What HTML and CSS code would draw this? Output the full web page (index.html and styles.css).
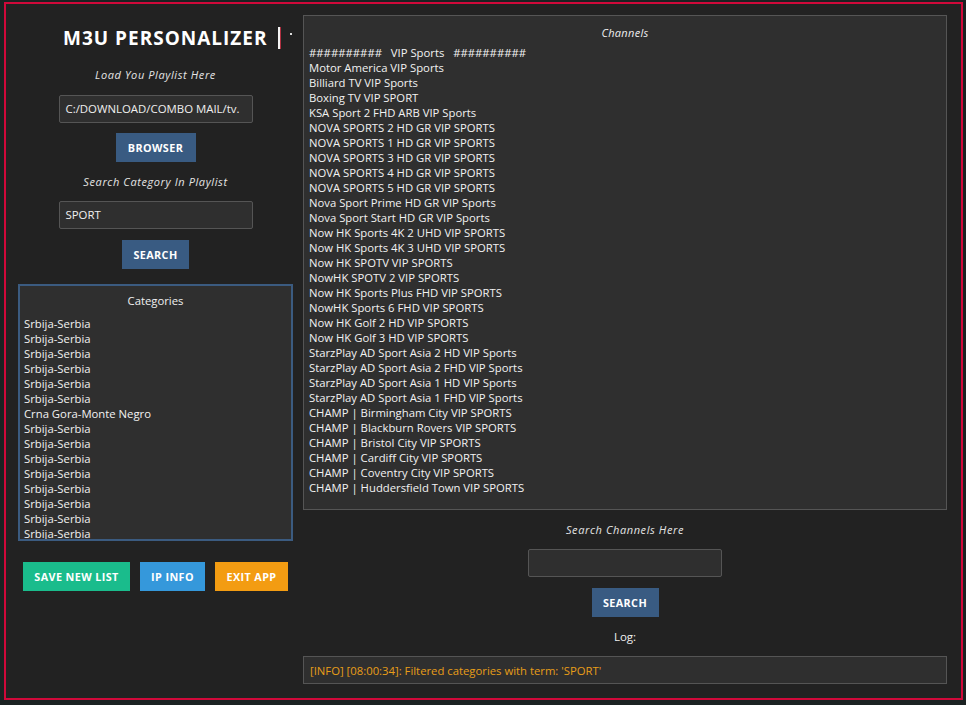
FILE: index.html
```html
<!DOCTYPE html>
<html>
<head>
<meta charset="utf-8">
<link rel="stylesheet" href="styles.css">
</head>
<body>
<div class="window">
  <div class="left">
    <div class="title-row">
      <span class="title">M3U PERSONALIZER</span>
      <span class="caret"></span>
      <span class="dot"></span>
    </div>
    <div class="label l1">Load You Playlist Here</div>
    <div class="input in1">C:/DOWNLOAD/COMBO MAIL/tv.</div>
    <div class="btn btn-blue b-browse">BROWSER</div>
    <div class="label l2">Search Category In Playlist</div>
    <div class="input in2">SPORT</div>
    <div class="btn btn-blue b-search">SEARCH</div>
    <div class="categories">
      <div class="box-title">Categories</div>
      <div class="list cat-list">
        <div>Srbija-Serbia</div>
        <div>Srbija-Serbia</div>
        <div>Srbija-Serbia</div>
        <div>Srbija-Serbia</div>
        <div>Srbija-Serbia</div>
        <div>Srbija-Serbia</div>
        <div>Crna Gora-Monte Negro</div>
        <div>Srbija-Serbia</div>
        <div>Srbija-Serbia</div>
        <div>Srbija-Serbia</div>
        <div>Srbija-Serbia</div>
        <div>Srbija-Serbia</div>
        <div>Srbija-Serbia</div>
        <div>Srbija-Serbia</div>
        <div>Srbija-Serbia</div>
      </div>
    </div>
    <div class="actions">
      <div class="btn btn-green b-save">SAVE NEW LIST</div>
      <div class="btn btn-sky b-ip">IP INFO</div>
      <div class="btn btn-orange b-exit">EXIT APP</div>
    </div>
  </div>
  <div class="right">
    <div class="channels">
      <div class="box-title italic">Channels</div>
      <div class="list ch-list">
        <div class="pre">##########   VIP Sports   ##########</div>
        <div>Motor America VIP Sports</div>
        <div>Billiard TV VIP Sports</div>
        <div>Boxing TV VIP SPORT</div>
        <div>KSA Sport 2 FHD ARB VIP Sports</div>
        <div>NOVA SPORTS 2 HD GR VIP SPORTS</div>
        <div>NOVA SPORTS 1 HD GR VIP SPORTS</div>
        <div>NOVA SPORTS 3 HD GR VIP SPORTS</div>
        <div>NOVA SPORTS 4 HD GR VIP SPORTS</div>
        <div>NOVA SPORTS 5 HD GR VIP SPORTS</div>
        <div>Nova Sport Prime HD GR VIP Sports</div>
        <div>Nova Sport Start HD GR VIP Sports</div>
        <div>Now HK Sports 4K 2 UHD VIP SPORTS</div>
        <div>Now HK Sports 4K 3 UHD VIP SPORTS</div>
        <div>Now HK SPOTV VIP SPORTS</div>
        <div>NowHK SPOTV 2 VIP SPORTS</div>
        <div>Now HK Sports Plus FHD VIP SPORTS</div>
        <div>NowHK Sports 6 FHD VIP SPORTS</div>
        <div>Now HK Golf 2 HD VIP SPORTS</div>
        <div>Now HK Golf 3 HD VIP SPORTS</div>
        <div>StarzPlay AD Sport Asia 2 HD VIP Sports</div>
        <div>StarzPlay AD Sport Asia 2 FHD VIP Sports</div>
        <div>StarzPlay AD Sport Asia 1 HD VIP Sports</div>
        <div>StarzPlay AD Sport Asia 1 FHD VIP Sports</div>
        <div>CHAMP | Birmingham City VIP SPORTS</div>
        <div>CHAMP | Blackburn Rovers VIP SPORTS</div>
        <div>CHAMP | Bristol City VIP SPORTS</div>
        <div>CHAMP | Cardiff City VIP SPORTS</div>
        <div>CHAMP | Coventry City VIP SPORTS</div>
        <div>CHAMP | Huddersfield Town VIP SPORTS</div>
      </div>
    </div>
    <div class="label l3">Search Channels Here</div>
    <div class="input in3"></div>
    <div class="btn btn-blue b-search">SEARCH</div>
    <div class="log-label">Log:</div>
    <div class="log">[INFO] [08:00:34]: Filtered categories with term: 'SPORT'</div>
  </div>
</div>
</body>
</html>
```
FILE: styles.css
```css
html, body {
  margin: 0;
  padding: 0;
}
body {
  width: 966px;
  height: 705px;
  overflow: hidden;
  background: #1b2222;
  font-family: "Open Sans", "Noto Sans", sans-serif;
  color: #e6e6e6;
}
.window {
  box-sizing: border-box;
  width: 959px;
  height: 698px;
  margin: 2px 0 0 4px;
  border: 2px solid #d0093a;
  background: #222222;
  display: flex;
  gap: 10px;
  padding: 0 14px 0 12px;
}
.left {
  width: 275px;
  display: flex;
  flex-direction: column;
  align-items: center;
}
.right {
  width: 644px;
  display: flex;
  flex-direction: column;
  align-items: center;
}
.title-row {
  margin-top: 22px;
  height: 24px;
  display: flex;
  align-items: center;
  align-self: flex-start;
  margin-left: 45px;
}
.title {
  font-weight: 700;
  font-size: 19px;
  line-height: 24px;
  letter-spacing: 1px;
  color: #ffffff;
}
.caret {
  width: 2px;
  height: 22px;
  background: #f4f4f4;
  box-shadow: 1px 0 0 #b03040;
  margin-left: 10px;
}
.dot {
  width: 2px;
  height: 2px;
  background: #dddddd;
  margin-left: 10px;
  margin-top: -8px;
}
.label {
  font-style: italic;
  font-size: 11px;
  line-height: 12px;
  letter-spacing: 0.6px;
  color: #e4e4e4;
}
.l1 { margin-top: 19px; }
.l2 { margin-top: 14px; }
.l3 { margin-top: 14px; }
.input {
  box-sizing: border-box;
  width: 194px;
  height: 28px;
  background: #2f2f2f;
  border: 1px solid #555555;
  border-radius: 2px;
  font-size: 11.4px;
  line-height: 26px;
  padding-left: 6px;
  color: #f0f0f0;
  white-space: nowrap;
  overflow: hidden;
}
.in1 { margin-top: 14px; }
.in2 { margin-top: 13px; }
.in3 { margin-top: 13px; }
.btn {
  box-sizing: border-box;
  height: 29px;
  font-weight: 700;
  font-size: 10.8px;
  line-height: 29px;
  letter-spacing: 0.4px;
  color: #ffffff;
  text-align: center;
  white-space: nowrap;
}
.btn-blue { background: #395b82; }
.btn-green { background: #1abc8c; }
.btn-sky { background: #3598db; }
.btn-orange { background: #f39c12; }
.b-browse { margin-top: 10px; width: 80px; }
.b-search { margin-top: 11px; width: 67px; }
.categories {
  box-sizing: border-box;
  margin-top: 15px;
  width: 275px;
  height: 257px;
  border: 2px solid #3b5b80;
  background: #2f2f2f;
  overflow: hidden;
}
.box-title {
  font-size: 11.3px;
  line-height: 15px;
  text-align: center;
  padding-top: 7px;
  color: #f0f0f0;
}
.italic {
  font-style: italic;
  font-size: 11px;
  letter-spacing: 0.3px;
}
.list {
  font-size: 11.3px;
  line-height: 15px;
  color: #f2f2f2;
  white-space: nowrap;
}
.cat-list {
  margin-top: 8px;
  padding-left: 4px;
}
.actions {
  margin-top: 21px;
  display: flex;
  gap: 10px;
}
.b-save { width: 107px; }
.b-ip { width: 65px; }
.b-exit { width: 73px; }
.channels {
  box-sizing: border-box;
  margin-top: 11px;
  width: 644px;
  height: 495px;
  border: 1px solid #555555;
  background: #2f2f2f;
}
.channels .box-title {
  padding-top: 9px;
}
.ch-list {
  margin-top: 5px;
  padding-left: 5px;
}
.pre { white-space: pre; }
.log-label {
  margin-top: 13px;
  font-size: 11.5px;
  line-height: 14px;
  color: #f0f0f0;
}
.log {
  box-sizing: border-box;
  margin-top: 12px;
  width: 644px;
  height: 28px;
  background: #2f2f2f;
  border: 1px solid #555555;
  font-size: 11.3px;
  line-height: 27px;
  padding-left: 6px;
  color: #e89e18;
  white-space: nowrap;
}
```
